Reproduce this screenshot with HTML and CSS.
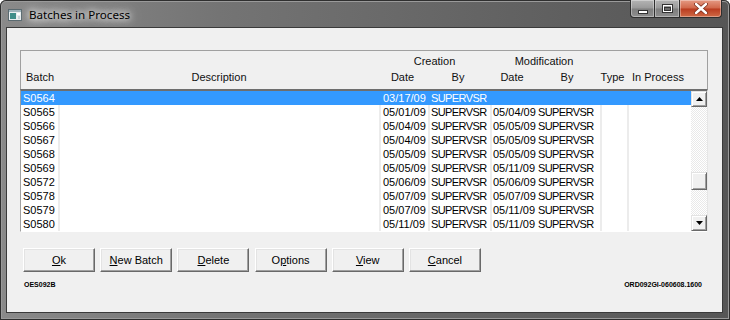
FILE: index.html
```html
<!DOCTYPE html>
<html>
<head>
<meta charset="utf-8">
<link rel="stylesheet" href="styles.css">
</head>
<body>
<div class="window">
  <div class="titlebar">
    <svg class="app-icon" width="14" height="12" viewBox="0 0 14 12">
      <rect x="0.5" y="0.5" width="13" height="11" fill="#e8eef0" stroke="#5a6a70"/>
      <rect x="1" y="1" width="12" height="2" fill="#9fb4bc"/>
      <rect x="2" y="4" width="6" height="6" fill="#3f8e8a"/>
      <rect x="9" y="4" width="3" height="2" fill="#ffffff"/>
      <rect x="10" y="7" width="2" height="3" fill="#c8d4d8"/>
    </svg>
    <span class="title">Batches in Process</span>
    <div class="controls">
      <div class="ctl min"><svg width="10" height="4" viewBox="0 0 10 4"><rect x="0.5" y="0.5" width="9" height="3" fill="#fff" stroke="#333"/></svg></div>
      <div class="ctl max"><svg width="11" height="9" viewBox="0 0 11 9"><rect x="0.5" y="0.5" width="10" height="8" fill="none" stroke="#333"/><rect x="1.5" y="1.5" width="8" height="6" fill="none" stroke="#fff"/><rect x="2.5" y="3.5" width="6" height="3" fill="#6a6a6a" stroke="#333"/></svg></div>
      <div class="ctl close"><svg width="14" height="11" viewBox="0 0 14 11"><path d="M2 1 L12 10 M12 1 L2 10" stroke="#7a2a18" stroke-width="4" stroke-linecap="round"/><path d="M2 1 L12 10 M12 1 L2 10" stroke="#fff" stroke-width="2.4" stroke-linecap="round"/></svg></div>
    </div>
  </div>
  <div class="client">
    <div class="grid-box">
      <div class="head">
        <div class="hrow">
          <span class="hc span-cre">Creation</span>
          <span class="hc span-mod">Modification</span>
        </div>
        <div class="hrow">
          <span class="hc left">Batch</span>
          <span class="hc desc">Description</span>
          <span class="hc">Date</span>
          <span class="hc">By</span>
          <span class="hc">Date</span>
          <span class="hc">By</span>
          <span class="hc">Type</span>
          <span class="hc">In Process</span>
        </div>
      </div>
      <div class="list">
        <div class="rows">
          <div class="row sel"><span class="c c1">S0564</span><span class="c c2"></span><span class="c c3">03/17/09</span><span class="c c4">SUPERVSR</span><span class="c c5"></span><span class="c c6"></span><span class="c c7"></span><span class="c c8"></span></div>
          <div class="row"><span class="c c1">S0565</span><span class="c c2"></span><span class="c c3">05/01/09</span><span class="c c4">SUPERVSR</span><span class="c c5">05/04/09</span><span class="c c6">SUPERVSR</span><span class="c c7"></span><span class="c c8"></span></div>
          <div class="row"><span class="c c1">S0566</span><span class="c c2"></span><span class="c c3">05/04/09</span><span class="c c4">SUPERVSR</span><span class="c c5">05/05/09</span><span class="c c6">SUPERVSR</span><span class="c c7"></span><span class="c c8"></span></div>
          <div class="row"><span class="c c1">S0567</span><span class="c c2"></span><span class="c c3">05/04/09</span><span class="c c4">SUPERVSR</span><span class="c c5">05/05/09</span><span class="c c6">SUPERVSR</span><span class="c c7"></span><span class="c c8"></span></div>
          <div class="row"><span class="c c1">S0568</span><span class="c c2"></span><span class="c c3">05/05/09</span><span class="c c4">SUPERVSR</span><span class="c c5">05/05/09</span><span class="c c6">SUPERVSR</span><span class="c c7"></span><span class="c c8"></span></div>
          <div class="row"><span class="c c1">S0569</span><span class="c c2"></span><span class="c c3">05/05/09</span><span class="c c4">SUPERVSR</span><span class="c c5">05/11/09</span><span class="c c6">SUPERVSR</span><span class="c c7"></span><span class="c c8"></span></div>
          <div class="row"><span class="c c1">S0572</span><span class="c c2"></span><span class="c c3">05/06/09</span><span class="c c4">SUPERVSR</span><span class="c c5">05/06/09</span><span class="c c6">SUPERVSR</span><span class="c c7"></span><span class="c c8"></span></div>
          <div class="row"><span class="c c1">S0578</span><span class="c c2"></span><span class="c c3">05/07/09</span><span class="c c4">SUPERVSR</span><span class="c c5">05/07/09</span><span class="c c6">SUPERVSR</span><span class="c c7"></span><span class="c c8"></span></div>
          <div class="row"><span class="c c1">S0579</span><span class="c c2"></span><span class="c c3">05/07/09</span><span class="c c4">SUPERVSR</span><span class="c c5">05/11/09</span><span class="c c6">SUPERVSR</span><span class="c c7"></span><span class="c c8"></span></div>
          <div class="row"><span class="c c1">S0580</span><span class="c c2"></span><span class="c c3">05/11/09</span><span class="c c4">SUPERVSR</span><span class="c c5">05/11/09</span><span class="c c6">SUPERVSR</span><span class="c c7"></span><span class="c c8"></span></div>
        </div>
        <div class="scrollbar">
          <div class="sb-btn"><svg width="7" height="4" viewBox="0 0 7 4"><path d="M3.5 0 L7 4 L0 4 Z" fill="#000"/></svg></div>
          <div class="thumb"></div>
          <div class="sb-btn down"><svg width="7" height="4" viewBox="0 0 7 4"><path d="M0 0 L7 0 L3.5 4 Z" fill="#000"/></svg></div>
        </div>
      </div>
    </div>
    <div class="buttons">
      <div class="btn"><span><u>O</u>k</span></div>
      <div class="btn"><span><u>N</u>ew Batch</span></div>
      <div class="btn"><span><u>D</u>elete</span></div>
      <div class="btn"><span>O<u>p</u>tions</span></div>
      <div class="btn"><span><u>V</u>iew</span></div>
      <div class="btn"><span><u>C</u>ancel</span></div>
    </div>
    <div class="footer">
      <span>OES092B</span>
      <span>ORD092GI-060608.1600</span>
    </div>
  </div>
</div>
</body>
</html>
```

FILE: styles.css
```css
html, body {
  margin: 0;
  padding: 0;
  background: #ffffff;
}
body {
  width: 730px;
  height: 320px;
  overflow: hidden;
  font-family: "Liberation Sans", Arial, sans-serif;
  font-size: 11px;
  color: #000;
}
.window {
  width: 730px;
  height: 320px;
  box-sizing: border-box;
  display: flex;
  flex-direction: column;
  border-radius: 6px 6px 0 0;
  background: linear-gradient(to right, #8a8a8a 0%, #747474 30%, #626262 70%, #565656 100%);
  box-shadow: inset 0 0 0 1px #2f2f2f, inset 0 0 0 2px #9a9a9a;
}
.titlebar {
  height: 28px;
  flex: none;
  display: flex;
  align-items: center;
  padding-left: 8px;
}
.app-icon {
  flex: none;
  margin-right: 7px;
  margin-top: 1px;
}
.title {
  font-family: "Noto Sans", "Open Sans", sans-serif;
  font-size: 11.6px;
  color: #000;
  text-shadow: 0 0 6px #fff, 0 0 10px #fff, 0 0 16px rgba(255,255,255,0.9);
}
.controls {
  margin-left: auto;
  margin-right: 8px;
  align-self: flex-start;
  display: flex;
}
.ctl {
  height: 18px;
  box-sizing: border-box;
  border: 1px solid #2e2e2e;
  border-top: none;
  display: flex;
  align-items: center;
  justify-content: center;
  background: linear-gradient(#b4b4b4 0%, #999 48%, #7e7e7e 52%, #8e8e8e 100%);
  box-shadow: inset 0 0 0 1px rgba(255,255,255,0.35);
}
.ctl.min {
  width: 25px;
  border-radius: 0 0 0 4px;
}
.ctl.min svg { margin-top: 6px; }
.ctl.max {
  width: 25px;
  border-left: none;
}
.ctl.close {
  width: 42px;
  border-left: none;
  border-radius: 0 0 4px 0;
  background: linear-gradient(#e59a84 0%, #d0674a 48%, #b93b1f 52%, #cf6a46 100%);
}
.client {
  height: 284px;
  flex: none;
  margin: 0 8px 0 7px;
  box-sizing: border-box;
  padding: 22px 14px 0 13px;
  background: #f0f0f0;
  box-shadow: 0 0 0 1px #3a3a3a;
}
.grid-box {
  width: 688px;
}
.head {
  height: 39px;
  box-sizing: border-box;
  border: 1px solid #a0a0a0;
  border-bottom: none;
  padding-top: 3px;
}
.hrow {
  display: grid;
  grid-template-columns: 36px 321px 49px 62px 46px 64px 27px 64px 16px;
  height: 14px;
  line-height: 14px;
}
.hrow + .hrow {
  margin-top: 2px;
}
.hc {
  text-align: center;
  white-space: nowrap;
  color: #111;
}
.hc.left {
  text-align: left;
  padding-left: 5px;
}
.hc.desc {
  padding-left: 3px;
}
.span-cre {
  grid-column: 3 / 5;
  padding-left: 2px;
}
.span-mod {
  grid-column: 5 / 7;
}
.list {
  display: flex;
  height: 143px;
  box-sizing: border-box;
  border-top: 2px solid #6e6e6e;
  border-left: 1px solid #a0a0a0;
  border-right: 1px solid #e6e6e6;
  border-bottom: 1px solid #ffffff;
}
.rows {
  width: 670px;
  background: #ffffff;
}
.row {
  display: grid;
  grid-template-columns: 37px 321px 49px 62px 46px 64px 27px 64px;
  height: 14px;
  line-height: 14px;
}
.row.sel {
  background: #3399ff;
  color: #fff;
}
.c {
  white-space: nowrap;
  overflow: hidden;
  padding-left: 1px;
  border-left: 2px solid #ececec;
}
.c1 {
  padding-left: 2px;
  border-left: none;
}
.c3 { padding-left: 2px; }
.c6 {
  border-left: none;
  padding-left: 2px;
}
.c4, .c6 { letter-spacing: -0.6px; }
.row.sel .c {
  border-color: transparent;
}
.scrollbar {
  width: 16px;
  display: flex;
  flex-direction: column;
  background: repeating-conic-gradient(#ffffff 0 25%, #e9e9e9 0 50%) 0 0 / 2px 2px;
}
.sb-btn, .thumb {
  box-sizing: border-box;
  background: #f0f0f0;
  border: 1px solid;
  border-color: #e3e3e3 #696969 #696969 #e3e3e3;
  box-shadow: inset 1px 1px #ffffff, inset -1px -1px #a0a0a0;
}
.sb-btn {
  height: 16px;
  display: flex;
  align-items: center;
  justify-content: center;
}
.thumb {
  height: 18px;
  margin-top: 65px;
}
.sb-btn.down {
  margin-top: auto;
}
.buttons {
  display: flex;
  gap: 5.2px;
  margin: 16px 0 0 3px;
}
.btn {
  width: 72px;
  height: 24px;
  box-sizing: border-box;
  background: #f0f0f0;
  border: 1px solid;
  border-color: #ffffff #696969 #696969 #ffffff;
  box-shadow: inset -1px -1px #a0a0a0, inset 1px 1px #e3e3e3;
  display: flex;
  align-items: center;
  justify-content: center;
  font-size: 11px;
}
.footer {
  display: flex;
  justify-content: space-between;
  margin-top: 9px;
  padding: 0 6px 0 4px;
  font-size: 7px;
  font-weight: bold;
  line-height: 8px;
}
```
